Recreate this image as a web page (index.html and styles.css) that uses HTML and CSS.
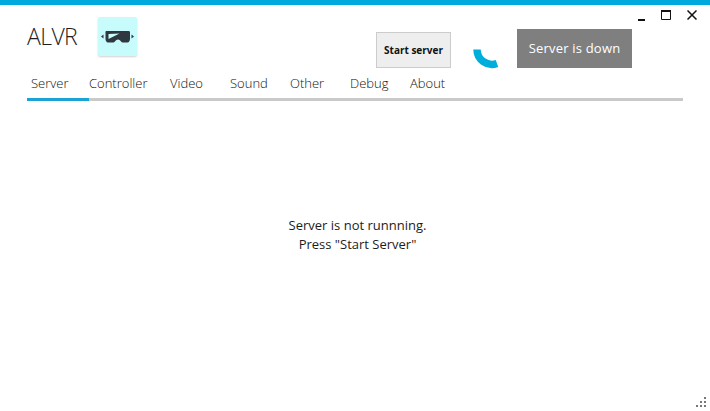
FILE: index.html
```html
<!DOCTYPE html>
<html lang="en">
<head>
<meta charset="utf-8">
<title>ALVR</title>
<link rel="stylesheet" href="styles.css">
</head>
<body>
<div class="window">
  <header class="header">
    <h1 class="title">ALVR</h1>
    <div class="logo">
      <svg width="33" height="14" viewBox="0 0 33 14">
        <path class="glyph" d="M0 6.500L2.500 4.500V8.500ZM33 6.500L30.500 4.500V8.500Z"/>
        <path class="glyph" fill-rule="evenodd" d="M5.500 1H27.500C28.500 1 29 1.500 29 2.500V9C29 10.500 28 12.500 26.500 12.500H21.500C20 12.500 19.500 9.500 17 9.500C14.500 9.500 14 12.500 12.500 12.500H7C5.500 12.500 4.500 10.500 4.500 9V2C4.500 1.400 5 1 5.500 1ZM7.500 4V9L18.500 3.500Z"/>
      </svg>
    </div>
    <button class="start" type="button">Start server</button>
    <svg class="spinner" width="26" height="21" viewBox="0 0 26 21">
      <path d="M4 1.500A15 15 0 0 0 24 15.500"/>
    </svg>
    <div class="status">Server is down</div>
    <div class="caption">
      <svg class="cap-min" width="8" height="8" viewBox="0 0 8 8"><rect x="0" y="6" width="7" height="2"/></svg>
      <svg width="10" height="10" viewBox="0 0 10 10"><path class="line" d="M0.500 1H9.500V9.500H0.500Z"/><rect x="0" y="0" width="10" height="2"/></svg>
      <svg class="cap-close" width="10" height="10" viewBox="0 0 10 10"><path class="line cross" d="M0.500 0.500L9.500 9.500M9.500 0.500L0.500 9.500"/></svg>
    </div>
  </header>
  <nav class="tabs">
    <div class="tab active">Server</div>
    <div class="tab">Controller</div>
    <div class="tab">Video</div>
    <div class="tab">Sound</div>
    <div class="tab">Other</div>
    <div class="tab">Debug</div>
    <div class="tab">About</div>
  </nav>
  <main class="content">
    <p class="message">Server is not runnning.<br>Press "Start Server"</p>
  </main>
  <svg class="grip" width="11" height="11" viewBox="0 0 11 11">
    <rect x="8" y="0" width="2" height="2"/>
    <rect x="4" y="4" width="2" height="2"/><rect x="8" y="4" width="2" height="2"/>
    <rect x="0" y="8" width="2" height="2"/><rect x="4" y="8" width="2" height="2"/><rect x="8" y="8" width="2" height="2"/>
  </svg>
</div>
</body>
</html>
```

FILE: styles.css
```css
* { box-sizing: border-box; }
html, body { margin: 0; height: 100%; }
body { background: #fff; color: #222; font-family: "Open Sans", "Noto Sans", sans-serif; overflow: hidden; }
.window { position: relative; height: 411px; border-top: 5px solid #00a9dd; display: flex; flex-direction: column; }
.header { position: relative; height: 68px; padding-left: 27px; display: flex; align-items: flex-start; flex: none; }
.title { margin: 15px 0 0; width: 71px; font-size: 23px; line-height: 33px; font-weight: 300; letter-spacing: -0.6px; color: #1e1e1e; }
.logo { margin-top: 12px; width: 39px; height: 39px; padding-top: 1px; background: #c8fbfb; border-radius: 2px; box-shadow: 0 1px 2px rgba(0,0,0,.18); display: flex; align-items: center; justify-content: center; }
.glyph { fill: #2f3840; }
.start { margin: 27px 0 0 239px; width: 75px; height: 36px; padding: 0; background: #eeeeee; border: 1px solid #cccccc; font: 700 10px "Open Sans", sans-serif; color: #111; }
.spinner { margin: 43px 0 0 22px; }
.spinner path { fill: none; stroke: #00aedb; stroke-width: 7.500; }
.status { margin: 24px 0 0 18px; width: 115px; height: 39px; background: #7f7f7f; color: #fff; font-size: 13px; font-weight: 400; letter-spacing: 0.2px; display: flex; align-items: center; justify-content: center; padding-bottom: 1px; white-space: nowrap; }
.caption { position: absolute; top: 5px; right: 14px; display: flex; gap: 15px; align-items: flex-start; }
.caption svg { fill: #111; flex: none; }
.caption .cap-min { margin-top: 3px; }
.caption .cap-close { margin-left: 1px; margin-right: -1px; }
.line { fill: none; stroke: #111; stroke-width: 1; }
.cross { stroke-width: 1.500; }
.tabs { margin: 0 27px; height: 28px; display: grid; grid-template-columns: 62px 81px 60px 60px 60px 60px 1fr; border-bottom: 3px solid #c9c9c9; flex: none; }
.tab { font-size: 13px; line-height: 21px; height: 28px; color: #111; font-weight: 300; white-space: nowrap; }
.tab.active { padding-left: 4px; border-bottom: 3px solid #1ba3d3; }
.content { flex: 1; display: flex; justify-content: center; padding: 115px 0 0 5px; }
.message { margin: 0; font-size: 13px; line-height: 19px; text-align: center; color: #1c1c1c; }
.grip { position: absolute; right: 3px; bottom: 3px; fill: #777; }
```
